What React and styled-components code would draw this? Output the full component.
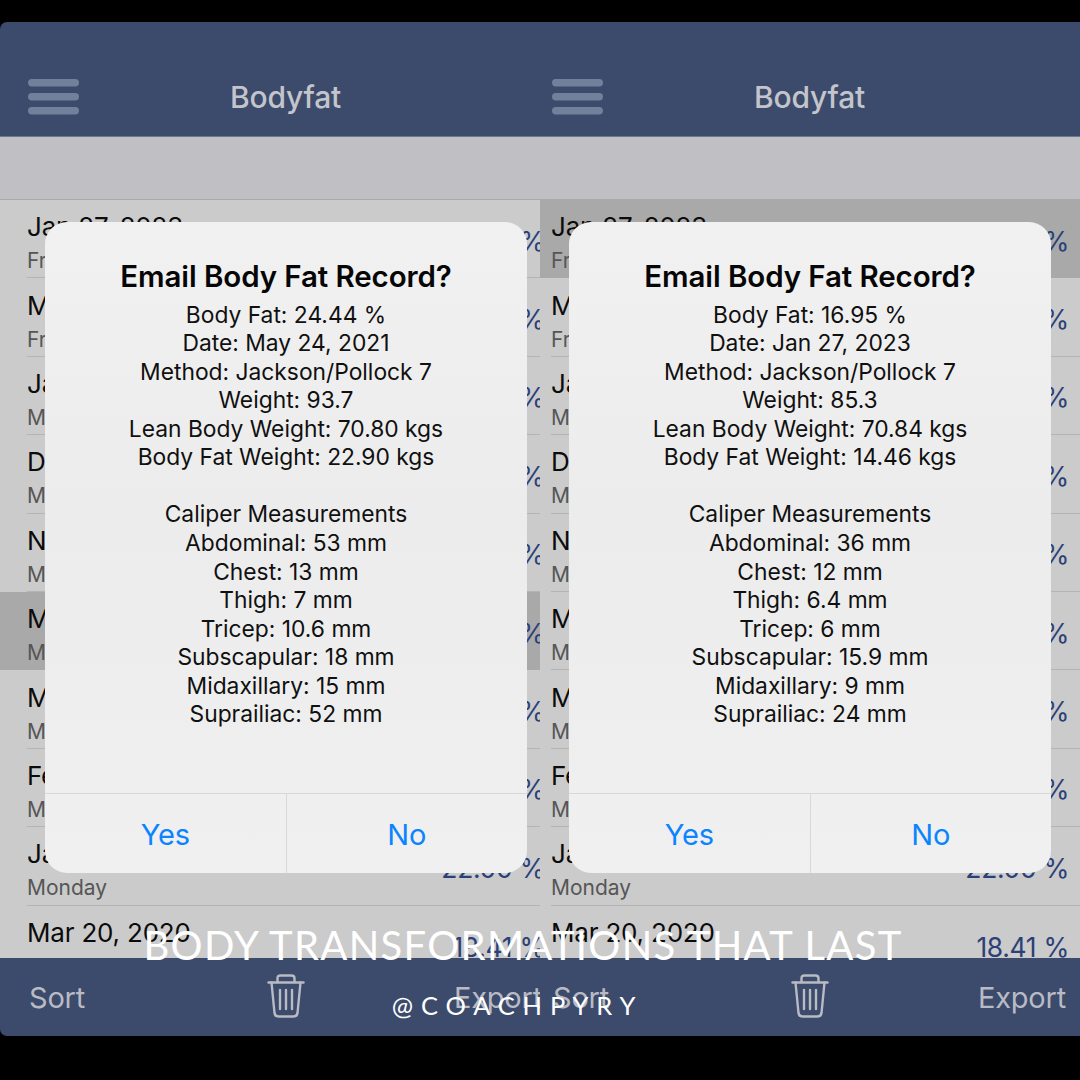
import React from "react";
import styled, { createGlobalStyle } from "styled-components";

const Global = createGlobalStyle`
  html, body { margin: 0; padding: 0; background: #000; }
  body { width: 1080px; height: 1080px; overflow: hidden; font-family: Inter, "Liberation Sans", sans-serif; }
  #root { height: 1080px; }
`;

const Stage = styled.main`
  position: relative;
  width: 1080px;
  height: 1080px;
  background: #000;
  padding-top: 22px;
  box-sizing: border-box;
  display: flex;
  align-items: flex-start;
`;

const Panel = styled.section`
  width: 540px;
  height: 1014px;
  flex: none;
  overflow: hidden;
  border-radius: ${(p) => (p.$first ? "7px 0 0 7px" : "0")};
`;

const Phone = styled.div`
  position: relative;
  width: 571px;
  height: 1014px;
  margin-left: ${(p) => (p.$first ? "0" : "-16px")};
  display: flex;
  flex-direction: column;
`;

const Header = styled.header`
  height: 115px;
  flex: none;
  box-sizing: border-box;
  background: #3c4a6b;
  border-bottom: 1px solid #6b7690;
  padding-left: 28px;
  display: flex;
  align-items: center;
  position: relative;
  padding-top: 35px;
`;

const Burger = styled.svg`
  width: 51px;
  height: 36px;
  flex: none;
  display: block;
`;

const Title = styled.h1`
  margin: 0;
  flex: 1;
  padding-right: 79px;
  padding-top: 1px;
  text-align: center;
  color: #c3c5cb;
  font-size: 30px;
  font-weight: 500;
  letter-spacing: -0.2px;
`;

const Band = styled.div`
  height: 62px;
  flex: none;
  background: #c0c0c4;
  border-bottom: 1px solid #a9a9ab;
`;

const List = styled.ul`
  flex: 1;
  margin: 0;
  padding: 0;
  list-style: none;
  overflow: hidden;
  background: #cbcbcb;
`;

const Row = styled.li`
  height: 78.4px;
  box-sizing: border-box;
  padding-left: 27px;
  background: ${(p) => (p.$active ? "#a9a9a9" : "#cbcbcb")};
`;

const RowInner = styled.div`
  height: 100%;
  box-sizing: border-box;
  padding-right: 27px;
  border-bottom: 1px solid ${(p) => (p.$active ? "#a9a9a9" : "#b4b4b4")};
  display: flex;
  align-items: center;
  justify-content: space-between;
`;

const RowText = styled.div`
  display: flex;
  flex-direction: column;
  gap: 6px;
  padding-top: 7px;
`;

const DateText = styled.span`
  font-size: 26px;
  line-height: 31px;
  color: #0b0b0b;
  letter-spacing: -0.2px;
`;

const Weekday = styled.span`
  font-size: 21px;
  line-height: 25px;
  color: #565656;
`;

const Percent = styled.span`
  font-size: 26.4px;
  color: #2a4077;
  letter-spacing: -0.3px;
  padding-top: 4px;
  margin-right: -1px;
`;

const LastRow = styled(Row)`
  height: 52px;
`;

const LastInner = styled.div`
  display: flex;
  justify-content: space-between;
  padding: 11px 27px 0 0;
`;

const LastPercent = styled(Percent)`
  padding-top: 14px;
`;

const Bottom = styled.footer`
  height: 78px;
  flex: none;
  background: #3c4a6b;
  position: relative;
  display: grid;
  grid-template-columns: 1fr auto 1fr;
  align-items: center;
  padding: 0 29px;
  box-sizing: border-box;
  color: #b8bbc4;
  font-size: 29px;
`;

const Tool = styled.span`
  justify-self: ${(p) => p.$align};
  letter-spacing: -0.2px;
  padding-top: 1px;
`;

const Trash = styled.svg`
  width: 38px;
  height: 44px;
  display: block;
  margin-bottom: 3px;
`;

const Dialog = styled.div`
  position: absolute;
  left: 45px;
  top: 200px;
  width: 482px;
  height: 651px;
  box-sizing: border-box;
  border-radius: 22px;
  background: linear-gradient(180deg, #f1f1f1 0%, #ececec 45%, #f0f0f0 100%);
  display: flex;
  flex-direction: column;
  overflow: hidden;
`;

const DialogBody = styled.div`
  flex: 1;
  padding-top: 36px;
  text-align: center;
  color: #101010;
`;

const DialogTitle = styled.h2`
  margin: 0 0 6px;
  font-size: 29.5px;
  line-height: 36px;
  font-weight: 600;
  color: #060606;
  letter-spacing: -0.1px;
`;

const Line = styled.div`
  font-size: 22.8px;
  line-height: 28.57px;
  height: 28.57px;
  position: relative;
  top: 0.5px;
`;

const Actions = styled.div`
  height: 79px;
  flex: none;
  border-top: 1px solid #d8d8d8;
  display: grid;
  grid-template-columns: 240.5px 1fr;
`;

const Action = styled.button`
  border: 0;
  background: transparent;
  padding: 2px 0 0;
  font-family: inherit;
  font-size: 29px;
  color: #0a84ff;
  letter-spacing: -0.2px;
  & + & { border-left: 1px solid #d8d8d8; }
`;

const Caption = styled.div`
  position: absolute;
  left: 0;
  top: ${(p) => p.$top}px;
  width: ${(p) => p.$width}px;
  text-align: center;
  color: #fff;
  font-family: Lato, "Noto Sans", sans-serif;
  font-weight: ${(p) => p.$weight};
  font-size: ${(p) => p.$size}px;
  letter-spacing: ${(p) => p.$track}px;
  line-height: 1;
  white-space: nowrap;
`;

const rowsLeft = [
  ["Jan 27, 2023", "Friday", "16.95 %"],
  ["May 13, 2022", "Friday", "18.20 %"],
  ["Jan 10, 2022", "Monday", "19.62 %"],
  ["Dec 13, 2021", "Monday", "20.15 %"],
  ["Nov 15, 2021", "Monday", "21.34 %"],
  ["May 24, 2021", "Monday", "24.44 %"],
  ["Mar 15, 2021", "Monday", "23.71 %"],
  ["Feb 15, 2021", "Monday", "23.08 %"],
  ["Jan 18, 2021", "Monday", "22.00 %"],
];

function Screen({ first, active, data }) {
  return (
    <Panel $first={first}>
      <Phone $first={first}>
        <Header>
          <Burger viewBox="0 0 51 36">
            <rect x="0" y="0" width="51" height="7.5" rx="3.7" fill="#73809b" />
            <rect x="0" y="14" width="51" height="7.5" rx="3.7" fill="#73809b" />
            <rect x="0" y="28" width="51" height="7.5" rx="3.7" fill="#73809b" />
          </Burger>
          <Title>Bodyfat</Title>
        </Header>
        <Band />
        <List>
          {rowsLeft.map((r, i) => (
            <Row key={r[0]} $active={i === active}>
              <RowInner $active={i === active}>
                <RowText>
                  <DateText>{r[0]}</DateText>
                  <Weekday>{r[1]}</Weekday>
                </RowText>
                <Percent>{r[2]}</Percent>
              </RowInner>
            </Row>
          ))}
          <LastRow>
            <LastInner>
              <DateText>Mar 20, 2020</DateText>
              <LastPercent>18.41 %</LastPercent>
            </LastInner>
          </LastRow>
        </List>
        <Bottom>
          <Tool $align="start">Sort</Tool>
          <Trash viewBox="0 0 38 44" fill="none" stroke="#b8bbc4" strokeWidth="2.4" strokeLinecap="round" strokeLinejoin="round">
            <path d="M1.5 8.5H36.5" />
            <path d="M10.5 8V4.5Q10.5 1.5 13.5 1.5H24.5Q27.5 1.5 27.5 4.5V8" />
            <path d="M4.5 8.5L7.5 39Q8 42.5 11.5 42.5H26.5Q30 42.5 30.5 39L33.5 8.5" />
            <path d="M13 16V35M19 16V35M25 16V35" />
          </Trash>
          <Tool $align="end">Export</Tool>
        </Bottom>
        <Dialog>
          <DialogBody>
            <DialogTitle>Email Body Fat Record?</DialogTitle>
            {data.map((l, i) => (
              <Line key={i}>{l || "\u00a0"}</Line>
            ))}
          </DialogBody>
          <Actions>
            <Action>Yes</Action>
            <Action>No</Action>
          </Actions>
        </Dialog>
      </Phone>
    </Panel>
  );
}

const left = [
  "Body Fat: 24.44 %", "Date: May 24, 2021", "Method: Jackson/Pollock 7", "Weight: 93.7",
  "Lean Body Weight: 70.80 kgs", "Body Fat Weight: 22.90 kgs", "", "Caliper Measurements",
  "Abdominal: 53 mm", "Chest: 13 mm", "Thigh: 7 mm", "Tricep: 10.6 mm", "Subscapular: 18 mm",
  "Midaxillary: 15 mm", "Suprailiac: 52 mm",
];
const right = [
  "Body Fat: 16.95 %", "Date: Jan 27, 2023", "Method: Jackson/Pollock 7", "Weight: 85.3",
  "Lean Body Weight: 70.84 kgs", "Body Fat Weight: 14.46 kgs", "", "Caliper Measurements",
  "Abdominal: 36 mm", "Chest: 12 mm", "Thigh: 6.4 mm", "Tricep: 6 mm", "Subscapular: 15.9 mm",
  "Midaxillary: 9 mm", "Suprailiac: 24 mm",
];

export default function App() {
  return (
    <Stage>
      <Global />
      <Screen first active={5} data={left} />
      <Screen active={0} data={right} />
      <Caption $top={925} $width={1046} $size={40} $weight={400} $track={1.3}>BODY TRANSFORMATIONS THAT LAST</Caption>
      <Caption $top={993} $width={1035} $size={25.5} $weight={400} $track={7.8}>@COACHPYRY</Caption>
    </Stage>
  );
}
